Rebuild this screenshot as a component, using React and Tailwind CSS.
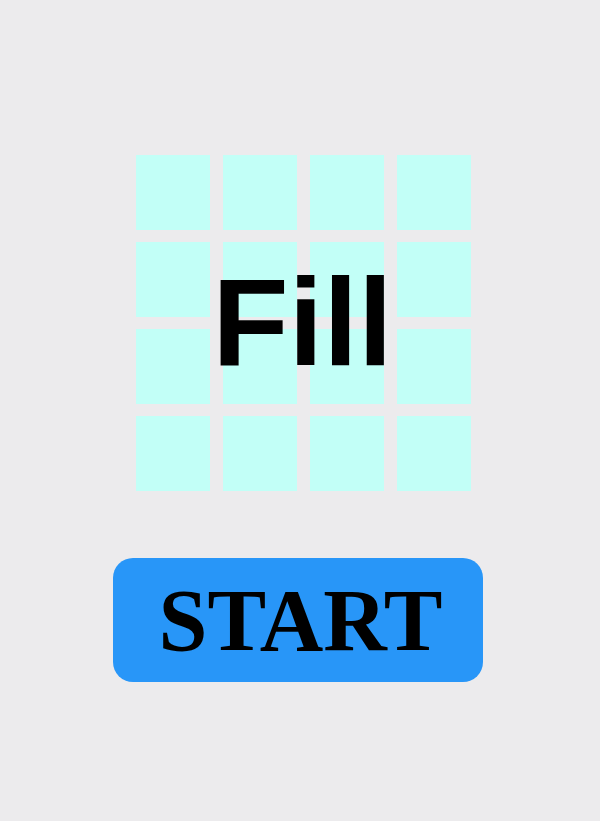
const cells = Array.from({ length: 16 }, (_, i) => i);

export default function App() {
  return (
    <div className="w-[600px] h-[821px] bg-[#ecebed] flex flex-col items-center pt-[155px]">
      <div className="relative ml-[7px]">
        <div className="grid grid-cols-[repeat(4,74px)] auto-rows-[75px] gap-x-[12.7px] gap-y-[12px]">
          {cells.map((i) => (
            <div key={i} className="bg-[#c2fff7]" />
          ))}
        </div>
        <div className="absolute inset-0 flex items-center justify-center">
          <span className="font-['Liberation_Sans',Arial,sans-serif] font-bold text-[125px] leading-none text-black mt-[-4px] ml-[-2px]">
            Fill
          </span>
        </div>
      </div>
      <button className="mt-[67px] ml-[-5px] w-[370px] h-[124px] rounded-[20px] bg-[#2896f8] flex items-center justify-center">
        <span className="font-['Liberation_Serif','Times_New_Roman',serif] font-bold text-[88px] leading-none text-black ml-[6px] mt-[1px]">
          START
        </span>
      </button>
    </div>
  );
}
